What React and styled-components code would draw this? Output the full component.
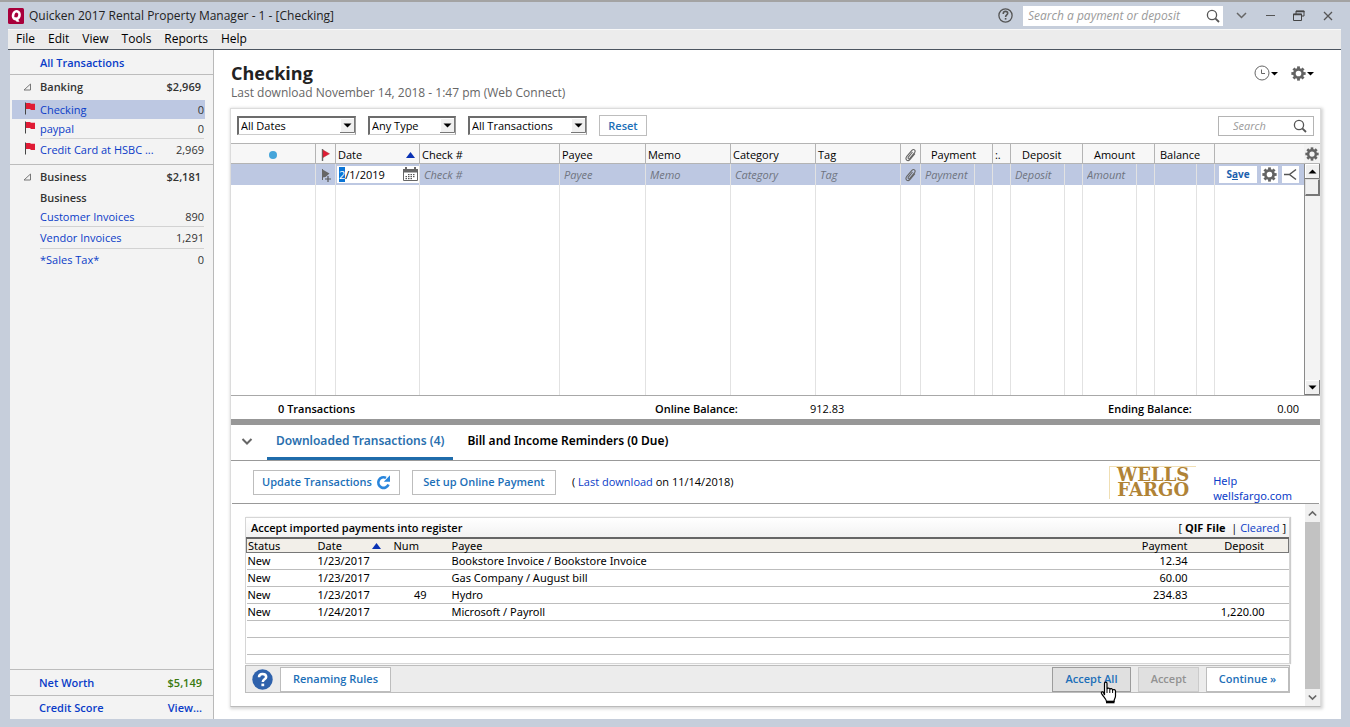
import { useEffect, useRef } from 'react';
import styled, { createGlobalStyle, css } from 'styled-components';

const GlobalStyle = createGlobalStyle`
  * {
    box-sizing: border-box;
  }

  body {
    margin: 0;
    background: #c6cedb;
    color: #000;
    font-family: 'Open Sans', 'Noto Sans', sans-serif;
    font-size: 11px;
    line-height: 16px;
  }

  button, input, select {
    font: inherit;
    color: inherit;
    margin: 0;
  }

  button {
    padding: 0;
    border: 0;
    background: none;
  }

  b {
    font-weight: 700;
  }

  a {
    color: #0a3cc8;
    text-decoration: none;
  }
`;

const Window = styled.div`
  display: flex;
  flex-direction: column;
  min-height: 100vh;
  padding: 0 9px 8px 8px;
  border-top: 2px solid #a3a3a3;
`;

const TitleBar = styled.header`
  display: flex;
  align-items: center;
  height: 27px;
`;

const AppTitle = styled.h1`
  flex: 1;
  margin: 0 0 0 5px;
  font-size: 12px;
  font-weight: 400;
  white-space: nowrap;
  color: #222;
`;

const TitleHelp = styled.button`
  display: flex;
`;

const SearchBox = styled.label`
  display: flex;
  align-items: center;
  width: 200px;
  height: 20px;
  margin: 0 12px 0 10px;
  padding: 0 3px 0 5px;
  background: #fff;
  color: #444;

  input {
    flex: 1;
    min-width: 0;
    border: 0;
    padding: 0;
    outline: 0;
    background: none;
    font-size: 12px;
    font-style: italic;
  }

  input::placeholder {
    color: #9a9a9a;
  }
`;

const RegisterSearch = styled(SearchBox)`
  width: 96px;
  margin: 0 0 0 auto;
  padding: 0 6px 0 14px;
  border: 1px solid #b4b4b4;

  input {
    font-size: 11px;
  }
`;

const WindowButtons = styled.div`
  display: flex;
  align-items: center;
  gap: 15px;
  padding-right: 6px;
  color: #555;

  button {
    display: flex;
  }
`;

const MenuBar = styled.nav`
  display: flex;
  gap: 13px;
  height: 21px;
  padding: 0 8px 1px;
  background: #ececec;
  border-top: 1px solid #f8f8f8;
  border-bottom: 1px solid #4c5560;
  font-size: 12px;
  line-height: 18px;
`;

const Body = styled.div`
  display: flex;
  flex: 1;
  background: #fff;
`;

const Sidebar = styled.aside`
  display: flex;
  flex-direction: column;
  width: 206px;
  flex-shrink: 0;
  background: #f3f3f3;
  border-left: 2px solid #c6cedb;
  border-right: 1px solid #b9b9b9;
  color: #333;
`;

const AllLink = styled.a`
  padding: 5px 0 3px 30px;
  border-bottom: 1px solid #bcbcbc;
  font-weight: 600;
`;

const Group = styled.section`
  padding-bottom: 3px;
  border-bottom: ${props => (props.$last ? '0' : '1px solid #bcbcbc')};
`;

const GroupHead = styled.h2`
  display: flex;
  align-items: center;
  height: 25px;
  margin: 0;
  padding: 0 12px 2px 13px;
  font-size: 11px;
  font-weight: 600;

  svg {
    margin-right: 8px;
  }

  span:last-child {
    margin-left: auto;
  }
`;

const SubHead = styled.h3`
  margin: 0;
  padding: 0 0 1px 30px;
  font-size: 11px;
  font-weight: 600;
`;

const Account = styled.div`
  display: flex;
  align-items: center;
  height: ${props => (props.$divided ? 22 : 19)}px;
  margin: 0 8px 0 2px;
  padding: 0 1px 0 13px;
  background: ${props => (props.$selected ? '#bdc8e2' : 'transparent')};

  &:last-child {
    height: 23px;
  }
`;

const AccountIcon = styled.span`
  width: 15px;
  height: 16px;
`;

const AccountLine = styled.span`
  display: flex;
  flex: 1;
  align-items: center;
  justify-content: space-between;
  height: 100%;
  border-top: ${props => (props.$divided ? '1px solid #d2d2d2' : '0')};
`;

const SideFoot = styled.div`
  margin-top: auto;
`;

const FootRow = styled.div`
  display: flex;
  align-items: center;
  justify-content: space-between;
  height: ${props => (props.$last ? 24 : 26)}px;
  padding: 0 11px 0 29px;
  border-top: 1px solid #bcbcbc;
  font-weight: 600;
  color: #3a7a10;
`;

const Main = styled.main`
  display: flex;
  flex: 1;
  flex-direction: column;
  min-width: 0;
  padding: 10px 20px 12px 16px;
`;

const PageHead = styled.div`
  display: flex;
  justify-content: space-between;
  height: 48px;
  padding: 0 6px 0 1px;
`;

const PageTitle = styled.h2`
  margin: 0;
  font-size: 18px;
  font-weight: 700;
  line-height: 26px;
  color: #222;
`;

const PageNote = styled.p`
  margin: 0;
  font-size: 12px;
  line-height: 14px;
  color: #666;
`;

const HeadTools = styled.div`
  display: flex;
  align-items: flex-start;
  gap: 12px;
  padding-top: 5px;

  button {
    display: flex;
    align-items: center;
    height: 16px;
  }
`;

const Panel = styled.div`
  display: flex;
  flex: 1;
  flex-direction: column;
  border: 1px solid #dcdcdc;
  border-bottom-color: #bbb;
  box-shadow: 1px 1px 3px 1px #d4d4d4;
`;

const FilterBar = styled.div`
  display: flex;
  align-items: center;
  height: 34px;
  gap: 12px;
  padding: 0 6px 1px;
`;

const SelectBox = styled.span`
  position: relative;
  display: flex;
  width: ${props => props.$width}px;
  height: 19px;

  select {
    width: 100%;
    padding: 0 20px 0 2px;
    appearance: none;
    border: 2px solid #6c6c6c;
    border-right: 1px solid #999;
    border-bottom: 1px solid #ccc;
    border-radius: 0;
    background: #fff;
  }

  svg {
    position: absolute;
    top: 2px;
    right: 1px;
    pointer-events: none;
  }
`;

const PushButton = styled.button`
  display: flex;
  align-items: center;
  justify-content: center;
  gap: 4px;
  height: ${props => (props.$small ? 21 : 25)}px;
  padding: 0 8px;
  min-width: ${props => props.$width}px;
  border: 1px solid #bdbdbd;
  background: #fff;
  color: #1c6fb8;
  font-family: 'Open Sans', sans-serif;
  font-weight: 600;
  white-space: nowrap;

  ${props => props.$pressed && css`
    background: #e0e0e0;
    border-color: #9c9c9c;
  `}

  &:disabled {
    background: #e0e0e0;
    border-color: #cbcbcb;
    color: #929292;
  }
`;

const Register = styled.div`
  display: grid;
  grid-template-columns: minmax(0, 1fr) 16px;
  border-top: 1px solid #b4b4b4;
  border-bottom: 1px solid #a8a8a8;
`;

const RegisterTable = styled.table`
  width: 100%;
  table-layout: fixed;
  border-collapse: separate;
  border-spacing: 0;

  th, td {
    height: 20px;
    padding: 0 2px;
    overflow: hidden;
    border-right: 1px solid #e2e2e2;
    text-align: left;
    white-space: nowrap;
  }

  th {
    padding-top: 2px;
    border-right-color: #b4b4b4;
    border-bottom: 1px solid #b4b4b4;
    background: #f7f7f7;
    font-weight: 500;
    line-height: 17px;
  }

  th:last-child, td:last-child {
    border-right: 0;
  }
`;

const EntryRow = styled.tr`
  background: #bdc8e2;

  td {
    height: 21px;
    padding-bottom: 1px;
  }

  input {
    display: block;
    width: 100%;
    height: 17px;
    padding: 0 2px;
    border: 0;
    outline: 0;
    background: none;
    font-style: italic;
  }

  input::placeholder {
    color: #6f7480;
  }
`;

const BlankRow = styled.tr`
  td {
    height: 210px;
  }
`;

const IconTh = styled.th`
  svg {
    display: block;
    margin: 0 auto;
  }
`;

const AmountTh = styled.th`
  && {
    padding-left: ${props => props.$indent}px;
  }
`;

const SortTh = styled.th`
  svg {
    float: right;
    margin: 6px 2px 0 0;
  }
`;

const IconTd = styled.td`
  && {
    padding: 0;
  }

  svg {
    display: block;
    margin: 0 auto;
  }
`;

const DateTd = styled.td`
  && {
    padding: 0 0 1px 1px;
  }
`;

const DateField = styled.div`
  display: flex;
  align-items: center;
  height: 17px;
  background: #fff;

  && input {
    flex: 1;
    min-width: 0;
    font-style: normal;
  }

  button {
    display: flex;
  }

  input::selection {
    background: #0a74d6;
    color: #fff;
  }
`;

const RowTools = styled.div`
  display: flex;
  align-items: center;
  gap: 4px;
  padding-left: 2px;

  button {
    display: flex;
    align-items: center;
    justify-content: center;
    width: 17px;
    height: 17px;
    background: #fff;
  }

  button:first-child {
    display: block;
    width: 38px;
    font-size: 10px;
    font-weight: 700;
    color: #1c5fae;
  }
`;

const RegisterScroll = styled.div`
  display: flex;
  flex-direction: column;
  align-items: center;
  background: #f3f3f3;

  button {
    display: flex;
  }

  > button:first-child {
    align-items: center;
    justify-content: center;
    width: 16px;
    height: 20px;
    border-bottom: 1px solid #b4b4b4;
  }
`;

const OldTrack = styled.div`
  display: flex;
  flex: 1;
  flex-direction: column;
  width: 16px;
  border-left: 1px solid #8a8a8a;

  button:last-child {
    margin-top: auto;
  }
`;

const OldThumb = styled.div`
  height: 17px;
  border: 1px solid #ddd;
  border-right: 2px solid #777;
  border-bottom: 2px solid #777;
  background: #f0f0f0;
`;

const Totals = styled.div`
  display: grid;
  grid-template-columns: 424fr 155fr 298fr 212fr;
  height: 29px;
  padding: 5px 0 0;
  border-bottom: 6px solid #979797;
  font-weight: 600;
  line-height: 16px;
`;

const TransactionCount = styled.span`
  padding-left: 47px;
`;

const EndingBalance = styled.span`
  display: flex;
  justify-content: space-between;
  padding-right: 21px;
`;

const Figure = styled.span`
  font-weight: 500;
`;

const Tabs = styled.div`
  display: flex;
  height: 36px;
  padding-left: 10px;
  border-bottom: 1px solid #999;
`;

const Tab = styled.button`
  padding: 0 9px;
  margin-right: 5px;
  border-bottom: 3px solid ${props => (props.$active ? '#1f6cab' : 'transparent')};
  font-family: 'Noto Sans', sans-serif;
  font-size: 12px;
  font-weight: 600;
  line-height: 32px;
  color: ${props => (props.$active ? '#2a6fae' : '#000')};
  white-space: nowrap;
`;

const CollapseButton = styled.button`
  display: flex;
  align-items: center;
  width: 26px;
  height: 32px;
`;

const BankBar = styled.div`
  display: flex;
  align-items: center;
  gap: 12px;
  height: 43px;
  margin: 0 1px;
  padding: 0 27px 0 21px;
  border-bottom: 1px solid #999;
`;

const DownloadNote = styled.p`
  margin: 0 auto 0 4px;
`;

const BankLogo = styled.div`
  width: 87px;
  height: 33px;
  border-top: 1px solid #f0dfb4;
  border-left: 1px solid #f0dfb4;
  color: #b08336;
  font-family: 'DejaVu Serif', serif;
  font-size: 18px;
  font-weight: 700;
  line-height: 15px;
  text-align: center;
`;

const BankLinks = styled.div`
  display: flex;
  flex-direction: column;
  align-self: flex-end;
  margin-left: 5px;
  font-family: 'Noto Sans', sans-serif;
  line-height: 15px;
`;

const Lower = styled.div`
  display: grid;
  flex: 1;
  grid-template-columns: minmax(0, 1fr) 15px;
`;

const LowerContent = styled.div`
  padding: 13px 15px 12px 14px;
`;

const ImportPanel = styled.section`
  padding-bottom: 8px;
  border: 1px solid #d6d6d6;
  box-shadow: 1px 0 1px #ccc;
`;

const ImportHead = styled.div`
  display: flex;
  align-items: center;
  justify-content: space-between;
  height: 19px;
  padding: 1px 3px 0 5px;
  background: linear-gradient(#fff, #f2f2f2);

  h3 {
    margin: 0;
    font-size: 11px;
    font-weight: 600;
  }
`;

const ImportTable = styled.table`
  width: 100%;
  table-layout: fixed;
  border-collapse: collapse;
  font-family: 'Noto Sans', sans-serif;

  th, td {
    height: 17px;
    padding: 0 2px 0 1px;
    border-bottom: 1px solid #bdbdbd;
    line-height: 14px;
    text-align: left;
    white-space: nowrap;
  }

  thead tr {
    border: 1px solid #777;
    border-top: 2px solid #666;
    background: #f2efe9;
  }

  th {
    height: 14px;
    border-bottom: 1px solid #777;
    font-weight: 400;
    line-height: 13px;
  }

  th svg {
    float: right;
    margin: 4px 10px 0 0;
  }

  .num {
    text-align: right;
  }

  .pad {
    padding-right: 24px;
  }
`;

const ActionBar = styled.div`
  display: flex;
  align-items: center;
  gap: 7px;
  height: 28px;
  margin-top: 1px;
  padding: 0 0 0 6px;
  border: 1px solid #bdbdbd;
  background: #ececec;

  > button:first-child {
    display: flex;
  }
`;

const Spacer = styled.span`
  flex: 1;
`;

const HoverTarget = styled.span`
  position: relative;

  > svg {
    position: absolute;
    top: 14px;
    left: 48px;
    z-index: 1;
  }
`;

const ThinTrack = styled.div`
  display: flex;
  flex-direction: column;
  padding-top: 1px;
  background: #f0f0f0;

  button {
    display: flex;
    align-items: center;
    justify-content: center;
    height: 17px;
  }
`;

const ThinThumb = styled.div`
  flex: 1;
  background: #c2c2c2;
`;

const QuickenLogo = () => (
  <svg width="16" height="16" viewBox="0 0 16 16">
    <rect width="16" height="16" rx="1.5" fill="#a8003b" />
    <ellipse cx="8.2" cy="7.2" rx="3.2" ry="4" fill="none" stroke="#fff" strokeWidth="2.6" transform="rotate(18 8 7.5)" />
    <path d="M6.3 9.3l2.6.2 2.6 4.3H8.6z" fill="#fff" />
  </svg>
);

const HelpRing = () => (
  <svg width="15" height="15" viewBox="0 0 15 15" fill="none" stroke="#555">
    <circle cx="7.5" cy="7.5" r="6.6" strokeWidth="1.3" />
    <path d="M5.3 6V5.2C5.4 3.9 6.3 3.4 7.5 3.4s2.2.7 2.2 1.9c0 1.5-2.1 1.7-2.1 3.6" strokeWidth="1.6" />
    <path d="M6.8 10.8h1.6" strokeWidth="1.6" />
  </svg>
);

const Magnifier = ({ size = 14 }) => (
  <svg width={size} height={size} viewBox="0 0 14 14" fill="none" stroke="#555">
    <circle cx="6" cy="6" r="4.6" strokeWidth="1.3" />
    <path d="M9.3 9.3L13 13" strokeWidth="1.8" />
  </svg>
);

const Chevron = ({ up, width = 11, bold = 2 }) => (
  <svg width={width} height="7" viewBox="0 0 11 7" fill="none" stroke="#666" strokeWidth={bold}>
    <path d={up ? 'M1 6l4.5-4.5L10 6' : 'M1 1l4.5 4.5L10 1'} />
  </svg>
);

const Gear = ({ size = 15 }) => (
  <svg width={size} height={size} viewBox="0 0 16 16" fill="none" stroke="#636363">
    <circle cx="8" cy="8" r="4.4" strokeWidth="2.8" />
    {[0, 45, 90, 135, 180, 225, 270, 315].map(a => (
      <path key={a} d="M8 3.2V.4" strokeWidth="3" transform={`rotate(${a} 8 8)`} />
    ))}
  </svg>
);

const Clock = () => (
  <svg width="16" height="16" viewBox="0 0 16 16" fill="none" stroke="#666">
    <circle cx="8" cy="8" r="7" />
    <path d="M7.5 4.5v4H11" />
  </svg>
);

const Caret = () => (
  <svg width="9" height="6" viewBox="0 0 9 6"><path d="M1 2h7L4.5 5.5z" /></svg>
);

const Flag = () => (
  <svg width="11" height="13" viewBox="0 0 11 13">
    <path d="M.5.5v12" stroke="#444" />
    <path d="M1 1h4l1 .8h4V8H6l-1-.9H1z" fill="#e01b35" />
  </svg>
);

const Fold = () => (
  <svg width="9" height="8" viewBox="0 0 9 8" fill="none" stroke="#777"><path d="M7.5 1v6H1z" /></svg>
);

const FlagHead = () => (
  <svg width="9" height="12" viewBox="0 0 9 12">
    <path d="M1.5 0v12" stroke="#666" strokeWidth="1.4" />
    <path d="M2 1l6.5 3.8L2 8.5z" fill="#e01b35" stroke="#a33" strokeWidth=".5" />
  </svg>
);

const FlagAdd = () => (
  <svg width="10" height="14" viewBox="0 0 10 14">
    <path d="M1.500 1v11" stroke="#666" />
    <path d="M1.500 1.500l7 4-4 3.500-3 .5z" fill="#666" />
    <path d="M4 11h6M7 8v6" stroke="#555" strokeWidth="1.200" />
  </svg>
);

const SortUp = () => (
  <svg width="9" height="6" viewBox="0 0 9 6"><path d="M4.500 0L9 6H0z" fill="#0a32b4" /></svg>
);

const Clip = () => (
  <svg width="13" height="14" viewBox="0 0 13 14" fill="none" stroke="#666" strokeWidth="1.100">
    <path d="M8.500 4L4.300 9.200c-.8 1.200.6 2.200 1.500 1.200l4.800-5.800c1.500-2.200-.9-4.200-2.700-2.300L2.600 8.700c-1.800 2.500.9 5.400 3.300 3l5-6" />
  </svg>
);

const Calendar = () => (
  <svg width="17" height="15" viewBox="0 0 17 15">
    <path d="M1.500 2.500h14v11h-14z" fill="#fff" stroke="#666" />
    <path d="M1 2h15v3.500H1zM3 0h2v3H3zM12 0h2v3h-2z" fill="#666" />
    {[[6, 7], [8.500, 7], [11, 7], [3.500, 9], [6, 9], [8.500, 9], [11, 9], [3.500, 11], [6, 11], [8.500, 11]].map(([x, y]) => (
      <rect key={`${x}-${y}`} x={x} y={y} width="1.500" height="1.200" fill="#555" />
    ))}
  </svg>
);

const SplitIcon = () => (
  <svg width="13" height="13" viewBox="0 0 13 13" fill="none" stroke="#555" strokeWidth="1.500">
    <path d="M0 6.500h5.500M12 1.500L5.500 6.500l6.500 5" />
  </svg>
);

const OldArrow = ({ up }) => (
  <svg width="15" height="15" viewBox="0 0 15 15">
    <path d="M0 0h15v15H0z" fill="#f0f0f0" />
    <path d="M.5 14.500V.5h14" fill="none" stroke="#fff" />
    <path d="M14.500 0v14.500H0" fill="none" stroke="#777" />
    <path d={up ? 'M3.500 9.500h8L7.500 5.500z' : 'M3.500 5.500h8L7.500 9.500z'} />
  </svg>
);

const Refresh = () => (
  <svg width="15" height="15" viewBox="0 0 15 15" fill="none">
    <path d="M12.500 9.500A5.300 5.300 0 1 1 10 2.900" stroke="#2a86dc" strokeWidth="2.600" />
    <path d="M14 .3v6.500H7.800z" fill="#2a86dc" />
  </svg>
);

const HelpDisc = () => (
  <svg width="21" height="21" viewBox="0 0 21 21" fill="none" stroke="#fff">
    <circle cx="10.500" cy="10.500" r="10.200" fill="#2f62ac" stroke="none" />
    <path d="M7 8.200c0-2.300 1.500-3.300 3.500-3.300s3.700 1.100 3.700 3c0 2.400-3.400 2.400-3.400 5" strokeWidth="2.500" />
    <path d="M9.400 15.900h2.800" strokeWidth="2.600" />
  </svg>
);

const Hand = () => (
  <svg width="18" height="23" viewBox="0 0 18 23">
    <path
      d="M4.500 14V2.500C4.500.7 7 .7 7 2.500V8c.3-1.300 2.700-1.200 2.800.5.500-1.300 2.700-1 2.800.6.700-1 2.900-.7 2.900 1v4.900c0 2-1.500 3-1.500 5.500H6.500c0-2.500-3-4.500-5-8C.8 11 2.700 10.300 3.500 11.500z"
      fill="#fff"
      stroke="#000"
      strokeWidth="1.200"
    />
    <path d="M7 8v4M9.800 8.500V12M12.600 9v3" stroke="#000" />
    <path d="M6 21h8.500" stroke="#000" strokeWidth="2.600" />
  </svg>
);

const menus = ['File', 'Edit', 'View', 'Tools', 'Reports', 'Help'];

const banking = [
  { name: 'Checking', balance: '0', flag: true, selected: true },
  { name: 'paypal', balance: '0', flag: true },
  { name: 'Credit Card at HSBC ...', balance: '2,969', flag: true, divided: true },
];

const business = [
  { name: 'Customer Invoices', balance: '890' },
  { name: 'Vendor Invoices', balance: '1,291', divided: true },
  { name: '*Sales Tax*', balance: '0', divided: true },
];

const downloads = [
  { date: '1/23/2017', num: '', payee: 'Bookstore Invoice / Bookstore Invoice', payment: '12.34', deposit: '' },
  { date: '1/23/2017', num: '', payee: 'Gas Company / August bill', payment: '60.00', deposit: '' },
  { date: '1/23/2017', num: '49', payee: 'Hydro', payment: '234.83', deposit: '' },
  { date: '1/24/2017', num: '', payee: 'Microsoft / Payroll', payment: '', deposit: '1,220.00' },
];

const registerColumns = [85, 20, 84, null, 86, 85, 85, 85, 20, 54, 18, 18, 54, 18, 54, 18, 42, 18, 89];

const AccountList = ({ accounts }) =>
  accounts.map(account => (
    <Account key={account.name} $selected={account.selected} $divided={account.divided}>
      <AccountIcon>{account.flag && <Flag />}</AccountIcon>
      <AccountLine $divided={account.divided}>
        <a href="#account">{account.name}</a>
        <span>{account.balance}</span>
      </AccountLine>
    </Account>
  ));

const Filter = ({ label, value, width }) => (
  <SelectBox $width={width}>
    <select aria-label={label} defaultValue={value}>
      <option>{value}</option>
    </select>
    <OldArrow />
  </SelectBox>
);

const RegisterGrid = () => {
  const dateRef = useRef(null);

  // The month part of the date is selected when the row opens
  useEffect(() => {
    dateRef.current.focus();
    dateRef.current.setSelectionRange(0, 1);
  }, []);

  return (
    <Register>
      <RegisterTable>
        <colgroup>
          {registerColumns.map((width, i) => <col key={i} width={width || undefined} />)}
        </colgroup>
        <thead>
          <tr>
            <IconTh aria-label="Status">
              <svg width="8" height="8" viewBox="0 0 8 8"><circle cx="4" cy="4" r="4" fill="#45a5da" /></svg>
            </IconTh>
            <IconTh aria-label="Flag"><FlagHead /></IconTh>
            <SortTh>Date<SortUp /></SortTh>
            <th>Check #</th>
            <th>Payee</th>
            <th>Memo</th>
            <th>Category</th>
            <th>Tag</th>
            <IconTh aria-label="Attachment"><Clip /></IconTh>
            <AmountTh colSpan={2} $indent={10}>Payment</AmountTh>
            <th>:.</th>
            <AmountTh colSpan={2} $indent={11}>Deposit</AmountTh>
            <AmountTh colSpan={2} $indent={11}>Amount</AmountTh>
            <AmountTh colSpan={2} $indent={5}>Balance</AmountTh>
            <th aria-label="Actions" />
          </tr>
        </thead>
        <tbody>
          <EntryRow>
            <td />
            <IconTd><FlagAdd /></IconTd>
            <DateTd>
              <DateField>
                <input ref={dateRef} aria-label="Date" defaultValue="2/1/2019" />
                <button aria-label="Open calendar"><Calendar /></button>
              </DateField>
            </DateTd>
            <td><input aria-label="Check #" placeholder="Check #" /></td>
            <td><input aria-label="Payee" placeholder="Payee" /></td>
            <td><input aria-label="Memo" placeholder="Memo" /></td>
            <td><input aria-label="Category" placeholder="Category" /></td>
            <td><input aria-label="Tag" placeholder="Tag" /></td>
            <IconTd><Clip /></IconTd>
            <td><input aria-label="Payment" placeholder="Payment" /></td>
            <td />
            <td />
            <td><input aria-label="Deposit" placeholder="Deposit" /></td>
            <td />
            <td><input aria-label="Amount" placeholder="Amount" /></td>
            <td />
            <td />
            <td />
            <td>
              <RowTools>
                <button>S<u>a</u>ve</button>
                <button aria-label="Row options"><Gear size={15} /></button>
                <button aria-label="Split"><SplitIcon /></button>
              </RowTools>
            </td>
          </EntryRow>
          <BlankRow>
            {registerColumns.map((_, i) => <td key={i} />)}
          </BlankRow>
        </tbody>
      </RegisterTable>
      <RegisterScroll>
        <button aria-label="Register columns"><Gear size={14} /></button>
        <OldTrack>
          <button aria-label="Scroll up"><OldArrow up /></button>
          <OldThumb />
          <button aria-label="Scroll down"><OldArrow /></button>
        </OldTrack>
      </RegisterScroll>
    </Register>
  );
};

const Downloaded = () => (
  <Lower>
    <LowerContent>
      <ImportPanel>
        <ImportHead>
          <h3>Accept imported payments into register</h3>
          <span>[ <b>QIF File</b> &nbsp;| <a href="#cleared">Cleared</a> ]</span>
        </ImportHead>
        <ImportTable>
          <colgroup>
            <col width="70" />
            <col width="76" />
            <col width="58" />
            <col />
            <col width="90" />
            <col width="99" />
          </colgroup>
          <thead>
            <tr>
              <th>Status</th>
              <th>Date<SortUp /></th>
              <th>Num</th>
              <th>Payee</th>
              <th className="num">Payment</th>
              <th className="num pad">Deposit</th>
            </tr>
          </thead>
          <tbody>
            {downloads.map(row => (
              <tr key={row.payee}>
                <td>New</td>
                <td>{row.date}</td>
                <td className="num pad">{row.num}</td>
                <td>{row.payee}</td>
                <td className="num">{row.payment}</td>
                <td className="num pad">{row.deposit}</td>
              </tr>
            ))}
            <tr><td colSpan={6} /></tr>
            <tr><td colSpan={6} /></tr>
          </tbody>
        </ImportTable>
      </ImportPanel>
      <ActionBar>
        <button aria-label="Help"><HelpDisc /></button>
        <PushButton $width={111}>Renaming Rules</PushButton>
        <Spacer />
        <HoverTarget>
          <PushButton $width={79} $pressed>Accept All</PushButton>
          <Hand />
        </HoverTarget>
        <PushButton $width={61} disabled>Accept</PushButton>
        <PushButton $width={83}>Continue »</PushButton>
      </ActionBar>
    </LowerContent>
    <ThinTrack>
      <button aria-label="Scroll up"><Chevron up width={9} /></button>
      <ThinThumb />
      <button aria-label="Scroll down"><Chevron width={9} /></button>
    </ThinTrack>
  </Lower>
);

const App = () => (
  <>
    <GlobalStyle />
    <Window>
      <TitleBar>
        <QuickenLogo />
        <AppTitle>Quicken 2017 Rental Property Manager - 1 - [Checking]</AppTitle>
        <TitleHelp aria-label="Help"><HelpRing /></TitleHelp>
        <SearchBox>
          <input aria-label="Search a payment or deposit" placeholder="Search a payment or deposit" />
          <Magnifier />
        </SearchBox>
        <WindowButtons>
          <button aria-label="More"><Chevron width={13} bold={1.5} /></button>
          <button aria-label="Minimize">
            <svg width="14" height="12" viewBox="0 0 14 12" stroke="#555"><path d="M3 5.500h9" /></svg>
          </button>
          <button aria-label="Restore">
            <svg width="14" height="12" viewBox="0 0 14 12" fill="none" stroke="#444">
              <path d="M4 4V1h8v5h-2M1.500 4h8v6.500h-8z" />
              <path d="M1 4.500h9M4 1.500h8.500" strokeWidth="1.600" />
            </svg>
          </button>
          <button aria-label="Close">
            <svg width="14" height="12" viewBox="0 0 14 12" stroke="#555" strokeWidth="1.300"><path d="M3 2l8 8M11 2l-8 8" /></svg>
          </button>
        </WindowButtons>
      </TitleBar>
      <MenuBar>
        {menus.map(menu => <button key={menu}>{menu}</button>)}
      </MenuBar>
      <Body>
        <Sidebar>
          <AllLink href="#all">All Transactions</AllLink>
          <Group>
            <GroupHead><Fold /><span>Banking</span><span>$2,969</span></GroupHead>
            <AccountList accounts={banking} />
          </Group>
          <Group $last>
            <GroupHead><Fold /><span>Business</span><span>$2,181</span></GroupHead>
            <SubHead>Business</SubHead>
            <AccountList accounts={business} />
          </Group>
          <SideFoot>
            <FootRow><a href="#networth">Net Worth</a><span>$5,149</span></FootRow>
            <FootRow $last><a href="#score">Credit Score</a><a href="#view">View...</a></FootRow>
          </SideFoot>
        </Sidebar>
        <Main>
          <PageHead>
            <div>
              <PageTitle>Checking</PageTitle>
              <PageNote>Last download November 14, 2018 - 1:47 pm (Web Connect)</PageNote>
            </div>
            <HeadTools>
              <button aria-label="Reminders"><Clock /><Caret /></button>
              <button aria-label="Account actions"><Gear /><Caret /></button>
            </HeadTools>
          </PageHead>
          <Panel>
            <FilterBar>
              <Filter label="Date range" value="All Dates" width={119} />
              <Filter label="Type" value="Any Type" width={88} />
              <Filter label="Transactions" value="All Transactions" width={119} />
              <PushButton $small $width={48}>Reset</PushButton>
              <RegisterSearch>
                <input aria-label="Search" placeholder="Search" />
                <Magnifier />
              </RegisterSearch>
            </FilterBar>
            <RegisterGrid />
            <Totals>
              <TransactionCount>0 Transactions</TransactionCount>
              <span>Online Balance:</span>
              <Figure>912.83</Figure>
              <EndingBalance>Ending Balance: <Figure>0.00</Figure></EndingBalance>
            </Totals>
            <Tabs>
              <CollapseButton aria-label="Collapse"><Chevron width={12} /></CollapseButton>
              <Tab $active>Downloaded Transactions (4)</Tab>
              <Tab>Bill and Income Reminders (0 Due)</Tab>
            </Tabs>
            <BankBar>
              <PushButton $width={147}>Update Transactions <Refresh /></PushButton>
              <PushButton $width={144}>Set up Online Payment</PushButton>
              <DownloadNote>( <a href="#last">Last download</a> on 11/14/2018)</DownloadNote>
              <BankLogo>WELLS FARGO</BankLogo>
              <BankLinks>
                <a href="#help">Help</a>
                <a href="#bank">wellsfargo.com</a>
              </BankLinks>
            </BankBar>
            <Downloaded />
          </Panel>
        </Main>
      </Body>
    </Window>
  </>
);

export default App;
